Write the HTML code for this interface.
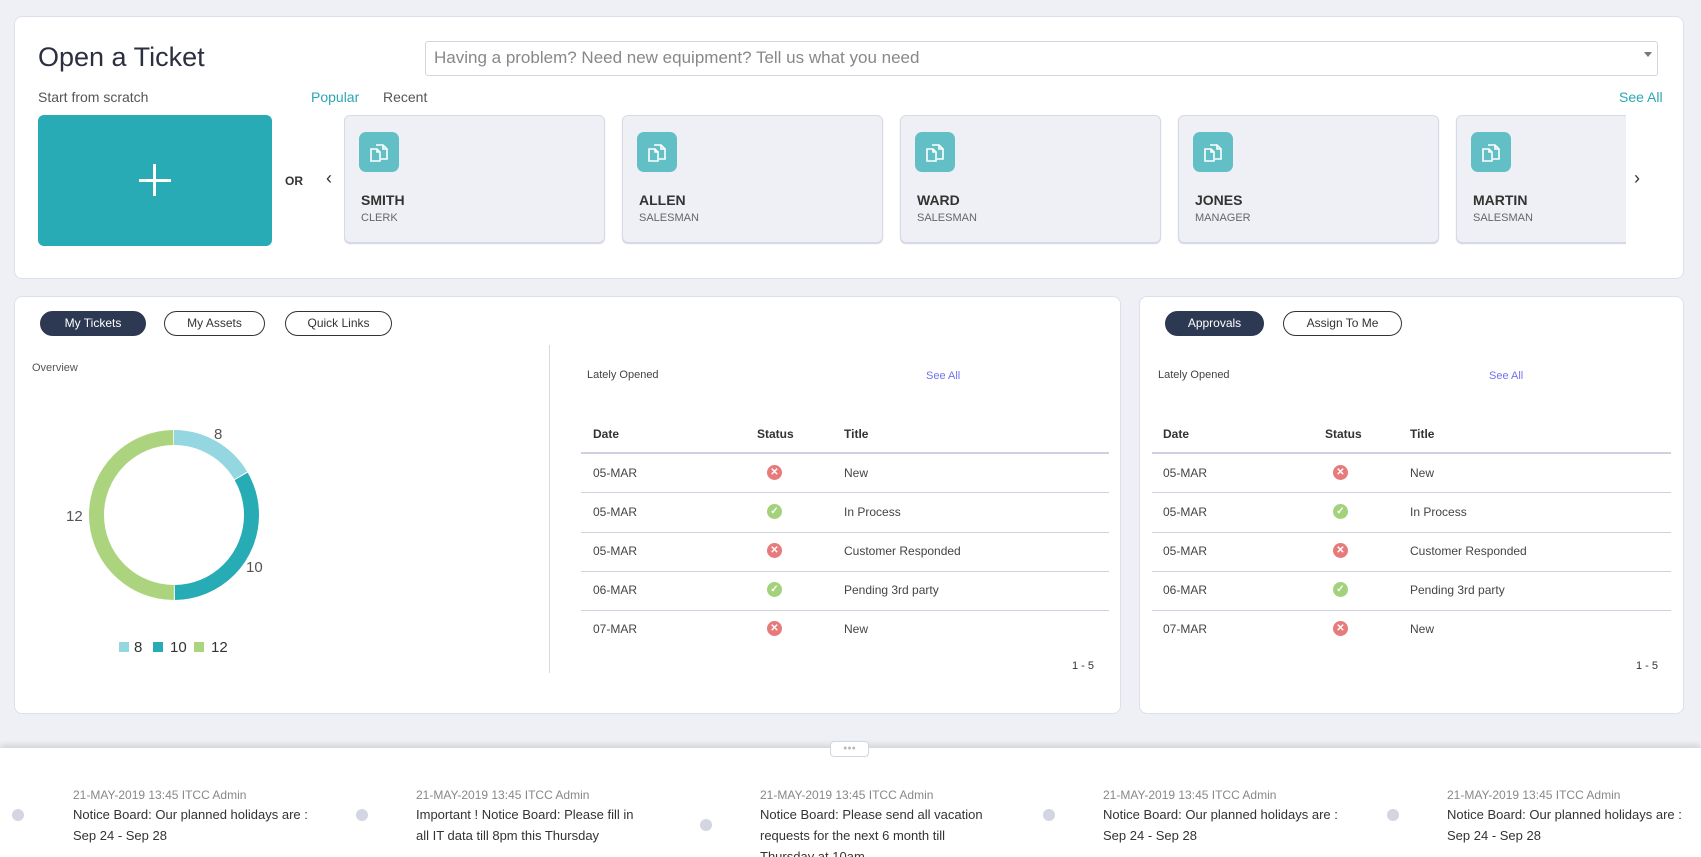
<!DOCTYPE html>
<html><head><meta charset="utf-8"><style>
*{box-sizing:border-box;margin:0;padding:0}
body{width:1701px;height:857px;overflow:hidden;background:#eff0f5;font-family:"Liberation Sans",sans-serif;color:#333;position:relative}
.a{position:absolute;white-space:nowrap}
.panel{position:absolute;background:#fff;border:1px solid #dde0ea;border-radius:8px}
.card{position:absolute;top:115px;width:261px;height:128px;background:#eff0f5;border:1px solid #d6d9e6;border-radius:6px;box-shadow:0 1px 1px #d0d3de}
.ic{position:absolute;left:14px;top:16px;width:40px;height:40px;background:#62bfc5;border-radius:7px}
.ic svg{position:absolute;left:9px;top:9px}
.nm{position:absolute;left:16px;top:76px;font-size:14px;font-weight:bold;color:#333}
.rl{position:absolute;left:16px;top:96px;font-size:11px;color:#666}
.pill{position:absolute;top:311px;height:25px;border-radius:13px;border:1px solid #333;font-size:12px;text-align:center;line-height:23px;color:#333}
.dark{background:#2d3852;color:#fff;border-color:#2d3852}
.th{font-size:12px;font-weight:bold;color:#333}
.td{font-size:12px;color:#444}
.hl{position:absolute;height:1px;background:#cfd2de}
.x,.ok{position:absolute;width:15px;height:15px;border-radius:50%;color:#fff;font-size:10px;font-weight:bold;text-align:center;line-height:15px}
.x{background:#e77b7b}.ok{background:#a4d27c}
.nd{position:absolute;width:12px;height:12px;border-radius:50%;background:#d3d6e2}
.ndt{position:absolute;font-size:12px;color:#888}
.ntx{position:absolute;font-size:13px;color:#333;line-height:21px;width:235px;white-space:normal}
</style></head><body>

<div class="panel" style="left:14px;top:16px;width:1670px;height:263px"></div>
<div class="a" style="left:38px;top:42px;font-size:27px;color:#2b2f40">Open a Ticket</div>
<div class="a" style="left:425px;top:41px;width:1233px;height:35px;border:1px solid #d3d6e2;border-radius:3px;background:#fff"></div>
<div class="a" style="left:434px;top:48px;font-size:17px;color:#888">Having a problem? Need new equipment? Tell us what you need</div>
<div class="a" style="left:1644px;top:52px;width:0;height:0;border-left:4px solid transparent;border-right:4px solid transparent;border-top:5px solid #777"></div>
<div class="a" style="left:38px;top:89px;font-size:14px;color:#555">Start from scratch</div>
<div class="a" style="left:311px;top:89px;font-size:14px;color:#2ba7b3">Popular</div>
<div class="a" style="left:383px;top:89px;font-size:14px;color:#555">Recent</div>
<div class="a" style="left:1619px;top:89px;font-size:14px;color:#2ba7b3">See All</div>
<div class="a" style="left:38px;top:115px;width:234px;height:131px;background:#28abb5;border-radius:6px"></div>
<div class="a" style="left:139px;top:179px;width:32px;height:3px;background:#fff"></div>
<div class="a" style="left:153px;top:164px;width:3px;height:32px;background:#fff"></div>
<div class="a" style="left:285px;top:174px;font-size:12px;font-weight:bold;color:#333">OR</div>
<div class="a" style="left:326px;top:168px;font-size:18px;color:#333">&#8249;</div>
<div class="a" style="left:1634px;top:168px;font-size:18px;color:#333">&#8250;</div>
<div style="position:absolute;left:344px;top:0;width:1282px;height:300px;overflow:hidden">
<div class="card" style="left:0"><div class="ic"><svg width="22" height="22" viewBox="0 0 22 22" fill="none" stroke="#fff" stroke-width="1.6"><path d="M8 4h7l4 4v10h-6"/><path d="M15 4v4h4"/><path d="M3 8h6l3 3v9H3z"/><path d="M9 8v3h3"/></svg></div><div class="nm">SMITH</div><div class="rl">CLERK</div></div>
<div class="card" style="left:278px"><div class="ic"><svg width="22" height="22" viewBox="0 0 22 22" fill="none" stroke="#fff" stroke-width="1.6"><path d="M8 4h7l4 4v10h-6"/><path d="M15 4v4h4"/><path d="M3 8h6l3 3v9H3z"/><path d="M9 8v3h3"/></svg></div><div class="nm">ALLEN</div><div class="rl">SALESMAN</div></div>
<div class="card" style="left:556px"><div class="ic"><svg width="22" height="22" viewBox="0 0 22 22" fill="none" stroke="#fff" stroke-width="1.6"><path d="M8 4h7l4 4v10h-6"/><path d="M15 4v4h4"/><path d="M3 8h6l3 3v9H3z"/><path d="M9 8v3h3"/></svg></div><div class="nm">WARD</div><div class="rl">SALESMAN</div></div>
<div class="card" style="left:834px"><div class="ic"><svg width="22" height="22" viewBox="0 0 22 22" fill="none" stroke="#fff" stroke-width="1.6"><path d="M8 4h7l4 4v10h-6"/><path d="M15 4v4h4"/><path d="M3 8h6l3 3v9H3z"/><path d="M9 8v3h3"/></svg></div><div class="nm">JONES</div><div class="rl">MANAGER</div></div>
<div class="card" style="left:1112px"><div class="ic"><svg width="22" height="22" viewBox="0 0 22 22" fill="none" stroke="#fff" stroke-width="1.6"><path d="M8 4h7l4 4v10h-6"/><path d="M15 4v4h4"/><path d="M3 8h6l3 3v9H3z"/><path d="M9 8v3h3"/></svg></div><div class="nm">MARTIN</div><div class="rl">SALESMAN</div></div>
</div>

<div class="panel" style="left:14px;top:296px;width:1107px;height:418px"></div>
<div class="panel" style="left:1139px;top:296px;width:545px;height:418px"></div>
<div class="pill dark" style="left:40px;width:106px">My Tickets</div>
<div class="pill" style="left:164px;width:101px">My Assets</div>
<div class="pill" style="left:285px;width:107px">Quick Links</div>
<div class="pill dark" style="left:1165px;width:99px">Approvals</div>
<div class="pill" style="left:1283px;width:119px">Assign To Me</div>
<div class="a" style="left:32px;top:362px;font-size:11px;color:#555">Overview</div>
<div class="a" style="left:549px;top:345px;width:1px;height:328px;background:#d6d9e4"></div>

<svg class="a" style="left:0;top:0" width="560" height="720">
<g transform="rotate(-90 174 515)" fill="none" stroke-width="15">
<circle cx="174" cy="515" r="77.5" stroke="#95d7e0" stroke-dasharray="80.2 406.8" stroke-dashoffset="0"/>
<circle cx="174" cy="515" r="77.5" stroke="#27acb6" stroke-dasharray="161.3 325.7" stroke-dashoffset="-81.2"/>
<circle cx="174" cy="515" r="77.5" stroke="#acd47f" stroke-dasharray="242.5 244.5" stroke-dashoffset="-243.5"/>
</g>
<g font-family="Liberation Sans" font-size="15" fill="#555">
<text x="214" y="439">8</text><text x="246" y="572">10</text><text x="66" y="521">12</text>
<rect x="119" y="642" width="10" height="10" fill="#95d7e0"/><text x="134" y="652" fill="#333">8</text>
<rect x="153" y="642" width="10" height="10" fill="#27acb6"/><text x="170" y="652" fill="#333">10</text>
<rect x="194" y="642" width="10" height="10" fill="#acd47f"/><text x="211" y="652" fill="#333">12</text>
</g></svg>

<!-- left table -->
<div class="a" style="left:587px;top:369px;font-size:11px;color:#444">Lately Opened</div>
<div class="a" style="left:926px;top:370px;font-size:11px;color:#6e74f0">See All</div>
<div class="a th" style="left:593px;top:427px">Date</div>
<div class="a th" style="left:757px;top:427px">Status</div>
<div class="a th" style="left:844px;top:427px">Title</div>
<div class="hl" style="left:581px;top:452px;width:528px;height:2px"></div>
<div class="hl" style="left:581px;top:492px;width:528px"></div>
<div class="hl" style="left:581px;top:532px;width:528px"></div>
<div class="hl" style="left:581px;top:571px;width:528px"></div>
<div class="hl" style="left:581px;top:610px;width:528px"></div>
<div class="a td" style="left:593px;top:466px">05-MAR</div><div class="x" style="left:767px;top:465px">✕</div><div class="a td" style="left:844px;top:466px">New</div>
<div class="a td" style="left:593px;top:505px">05-MAR</div><div class="ok" style="left:767px;top:504px">✓</div><div class="a td" style="left:844px;top:505px">In Process</div>
<div class="a td" style="left:593px;top:544px">05-MAR</div><div class="x" style="left:767px;top:543px">✕</div><div class="a td" style="left:844px;top:544px">Customer Responded</div>
<div class="a td" style="left:593px;top:583px">06-MAR</div><div class="ok" style="left:767px;top:582px">✓</div><div class="a td" style="left:844px;top:583px">Pending 3rd party</div>
<div class="a td" style="left:593px;top:622px">07-MAR</div><div class="x" style="left:767px;top:621px">✕</div><div class="a td" style="left:844px;top:622px">New</div>
<div class="a" style="left:1072px;top:660px;font-size:11px;color:#333">1 - 5</div>

<!-- right table -->
<div class="a" style="left:1158px;top:369px;font-size:11px;color:#444">Lately Opened</div>
<div class="a" style="left:1489px;top:370px;font-size:11px;color:#6e74f0">See All</div>
<div class="a th" style="left:1163px;top:427px">Date</div>
<div class="a th" style="left:1325px;top:427px">Status</div>
<div class="a th" style="left:1410px;top:427px">Title</div>
<div class="hl" style="left:1152px;top:452px;width:519px;height:2px"></div>
<div class="hl" style="left:1152px;top:492px;width:519px"></div>
<div class="hl" style="left:1152px;top:532px;width:519px"></div>
<div class="hl" style="left:1152px;top:571px;width:519px"></div>
<div class="hl" style="left:1152px;top:610px;width:519px"></div>
<div class="a td" style="left:1163px;top:466px">05-MAR</div><div class="x" style="left:1333px;top:465px">✕</div><div class="a td" style="left:1410px;top:466px">New</div>
<div class="a td" style="left:1163px;top:505px">05-MAR</div><div class="ok" style="left:1333px;top:504px">✓</div><div class="a td" style="left:1410px;top:505px">In Process</div>
<div class="a td" style="left:1163px;top:544px">05-MAR</div><div class="x" style="left:1333px;top:543px">✕</div><div class="a td" style="left:1410px;top:544px">Customer Responded</div>
<div class="a td" style="left:1163px;top:583px">06-MAR</div><div class="ok" style="left:1333px;top:582px">✓</div><div class="a td" style="left:1410px;top:583px">Pending 3rd party</div>
<div class="a td" style="left:1163px;top:622px">07-MAR</div><div class="x" style="left:1333px;top:621px">✕</div><div class="a td" style="left:1410px;top:622px">New</div>
<div class="a" style="left:1636px;top:660px;font-size:11px;color:#333">1 - 5</div>

<!-- notice board -->
<div class="a" style="left:0;top:748px;width:1701px;height:109px;background:#fff;box-shadow:0 -3px 6px rgba(0,0,0,.12)"></div>
<div class="a" style="left:830px;top:741px;width:39px;height:16px;background:#fff;border:1px solid #d3d6e2;border-radius:4px;font-size:7px;color:#bbb;text-align:center;line-height:13px">●●●</div>

<div style="position:absolute;left:0;top:748px;width:1701px;height:109px;overflow:hidden">
<div class="nd" style="left:12px;top:61px"></div>
<div class="ndt a" style="left:73px;top:40px">21-MAY-2019 13:45 ITCC Admin</div>
<div class="ntx" style="left:73px;top:56px">Notice Board: Our planned holidays are : Sep 24 - Sep 28</div>

<div class="nd" style="left:356px;top:61px"></div>
<div class="ndt a" style="left:416px;top:40px">21-MAY-2019 13:45 ITCC Admin</div>
<div class="ntx" style="left:416px;top:56px;width:228px">Important ! Notice Board: Please fill in all IT data till 8pm this Thursday</div>

<div class="nd" style="left:700px;top:71px"></div>
<div class="ndt a" style="left:760px;top:40px">21-MAY-2019 13:45 ITCC Admin</div>
<div class="ntx" style="left:760px;top:56px;width:228px">Notice Board: Please send all vacation requests for the next 6 month till Thursday at 10am</div>

<div class="nd" style="left:1043px;top:61px"></div>
<div class="ndt a" style="left:1103px;top:40px">21-MAY-2019 13:45 ITCC Admin</div>
<div class="ntx" style="left:1103px;top:56px">Notice Board: Our planned holidays are : Sep 24 - Sep 28</div>

<div class="nd" style="left:1387px;top:61px"></div>
<div class="ndt a" style="left:1447px;top:40px">21-MAY-2019 13:45 ITCC Admin</div>
<div class="ntx" style="left:1447px;top:56px">Notice Board: Our planned holidays are : Sep 24 - Sep 28</div>
</div>
</body></html>
